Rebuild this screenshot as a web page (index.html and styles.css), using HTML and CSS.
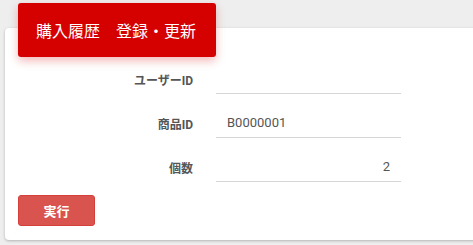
FILE: index.html
```html
<!DOCTYPE html>
<html lang="ja">
<head>
<meta charset="utf-8">
<title>購入履歴 登録・更新</title>
<link rel="stylesheet" href="styles.css">
</head>
<body>
<div class="card">
  <div class="card-header">購入履歴　登録・更新</div>
  <form class="form">
    <div class="row">
      <label class="label">ユーザーID</label>
      <div class="field"></div>
    </div>
    <div class="row">
      <label class="label">商品ID</label>
      <div class="field">B0000001</div>
    </div>
    <div class="row">
      <label class="label">個数</label>
      <div class="field num">2</div>
    </div>
    <button type="button" class="btn">実行</button>
  </form>
</div>
</body>
</html>
```
FILE: styles.css
```css
html, body {
  margin: 0;
  padding: 0;
  background: #eeeeee;
  font-family: Roboto, "Noto Sans CJK JP", sans-serif;
}
body {
  padding: 28px 0 0 5px;
  height: 245px;
  box-sizing: border-box;
  overflow: hidden;
}
.card {
  display: flow-root;
  width: 480px;
  background: #fff;
  border-radius: 4px;
  box-shadow: 0 1px 3px rgba(0,0,0,0.25);
  padding: 0 13px 14px;
  box-sizing: border-box;
}
.card-header {
  margin-top: -25px;
  width: 198px;
  height: 54px;
  box-sizing: border-box;
  padding-left: 18px;
  display: flex;
  align-items: center;
  background: #d50000;
  color: #fff;
  font-size: 16px;
  border-radius: 3px;
  box-shadow: 0 4px 10px rgba(213,0,0,0.28);
}
.form {
  margin: 7px 0 0;
  display: flex;
  flex-direction: column;
  gap: 14px;
}
.row {
  display: flex;
  align-items: center;
  gap: 23px;
}
.label {
  width: 175px;
  text-align: right;
  font-size: 12px;
  font-weight: bold;
  color: #555;
}
.field {
  width: 185px;
  height: 30px;
  box-sizing: border-box;
  border-bottom: 1px solid #d6d6d6;
  padding: 0 11px;
  display: flex;
  align-items: center;
  font-size: 13px;
  color: #555;
}
.field.num {
  justify-content: flex-end;
}
.btn {
  margin-top: -1px;
  align-self: flex-start;
  width: 77px;
  height: 31px;
  background: #d9534f;
  border: 1px solid #d43f3a;
  border-radius: 3px;
  color: #fff;
  font-family: Roboto, "Noto Sans CJK JP", sans-serif;
  font-size: 13px;
  font-weight: bold;
  padding: 0;
}
```
